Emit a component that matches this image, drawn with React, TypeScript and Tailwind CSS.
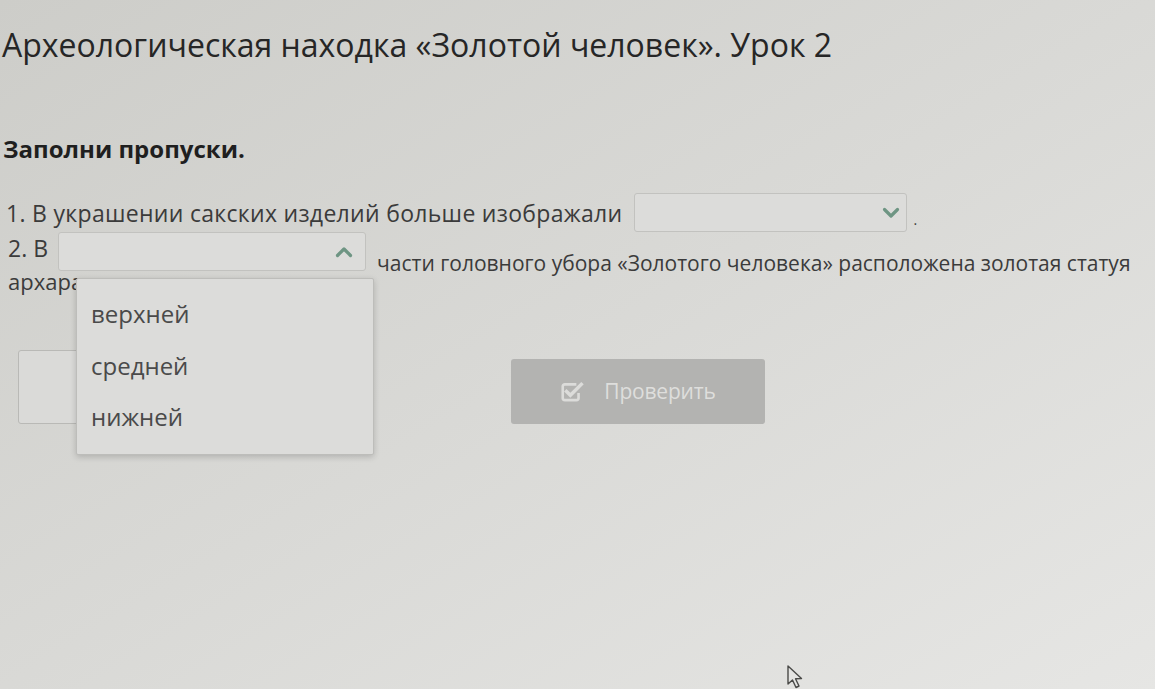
function Chevron({ up }: { up?: boolean }) {
  return (
    <svg width="18" height="12" viewBox="0 0 18 12" className="text-[#6e9583]">
      <path
        d={up ? "M2.5 9.5 L9 3 L15.5 9.5" : "M2.5 2.5 L9 9 L15.5 2.5"}
        fill="none"
        stroke="currentColor"
        strokeWidth="3.2"
        strokeLinecap="round"
        strokeLinejoin="round"
      />
    </svg>
  );
}

function CheckSquare() {
  return (
    <svg width="24" height="22" viewBox="0 0 22 20" className="text-[#dcdcda]">
      <path
        d="M15 3 H4.5 Q2.5 3 2.5 5 V15.5 Q2.5 17.5 4.5 17.5 H15 Q17 17.5 17 15.5 V11"
        fill="none"
        stroke="currentColor"
        strokeWidth="2.4"
        strokeLinejoin="round"
      />
      <path
        d="M6 9.5 L9.5 13 L19.5 3"
        fill="none"
        stroke="currentColor"
        strokeWidth="3.2"
        strokeLinecap="square"
      />
    </svg>
  );
}

function Cursor() {
  return (
    <svg width="20" height="26" viewBox="0 0 20 26" className="absolute left-[786px] top-[664px]">
      <path
        d="M2 2 L2 20 L6.5 16 L10 23.5 L13 22 L9.5 14.8 L15.5 14.5 Z"
        fill="#e4e4e2"
        stroke="#4a4a48"
        strokeWidth="1.4"
        strokeLinejoin="round"
      />
    </svg>
  );
}

export default function App() {
  const options = ["верхней", "средней", "нижней"];

  return (
    <div className="relative h-[689px] w-[1155px] overflow-hidden bg-linear-to-br from-[#cdcdc9] via-[#d9d9d6] to-[#e6e6e4] font-['Open_Sans',sans-serif] text-[#3b3b3b]">
      <div className="flex flex-col pl-[2px]">
        <h1 className="mt-[23px] text-[32px] leading-[44px] text-[#262626]">
          Археологическая находка «Золотой человек». Урок 2
        </h1>

        <p className="mt-[67px] pl-[1px] text-[24px] font-bold leading-[30px] text-[#1f1f1f]">
          Заполни пропуски.
        </p>

        <div className="mt-[29px] flex items-center pl-[4px] text-[23px] leading-[30px]">
          <span className="tracking-[0.3px]">1. В украшении сакских изделий больше изображали</span>
          <div className="ml-[12px] flex h-[39px] w-[273px] items-center justify-end rounded-[3px] border border-[#c2c2bf] bg-[#dcdcda] pr-[6px]">
            <Chevron />
          </div>
          <span className="ml-[6px] mt-[14px] text-[14px] leading-none">.</span>
        </div>

        <div className="relative mt-0 pl-[6px] text-[22px] leading-[36px]">
          <div className="flex items-start">
            <span className="mt-[-2px] text-[23px]">2. В</span>
            <div className="ml-[10px] flex h-[39px] w-[308px] items-center justify-end rounded-[3px] border border-[#c2c2bf] bg-[#dcdcda] pr-[12px]">
              <Chevron up />
            </div>
            <span className="ml-[11px] mt-[13px] text-[21px]">
              части головного убора «Золотого человека» расположена золотая статуя
            </span>
          </div>
          <div className="mt-[-18px] text-[22px]">архара.</div>

          <div className="absolute left-[74px] top-[46px] z-10 flex h-[177px] w-[298px] flex-col rounded-[2px] border border-[#bdbdba] bg-[#dcdcda] pt-[20px] shadow-[0_2px_6px_rgba(0,0,0,0.18)]">
            {options.map((o) => (
              <div key={o} className="h-[52px] pl-[14px] text-[24px] leading-[30px] text-[#4a4a4a]">
                {o}
              </div>
            ))}
          </div>
        </div>

        <div className="mt-[51px] flex items-start pl-[16px]">
          <div className="h-[74px] w-[200px] rounded-[3px] border border-[#b9b9b6] bg-[#dadad8]" />
          <button className="ml-[293px] mt-[9px] flex h-[65px] w-[254px] items-center justify-center gap-[20px] rounded-[3px] bg-[#b3b3b1] text-[21px] text-[#dededc]">
            <CheckSquare />
            <span className="tracking-[-0.2px]">Проверить</span>
          </button>
        </div>
      </div>
      <Cursor />
    </div>
  );
}
